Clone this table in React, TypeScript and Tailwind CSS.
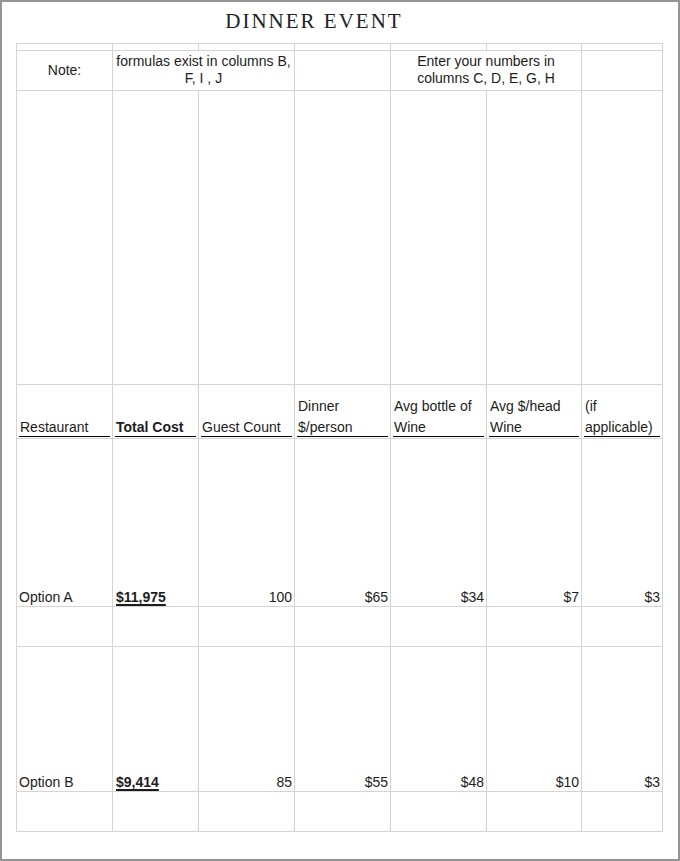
import React from "react";

const C = "border-r border-b border-[#d4d4d4]";

function Cell({ className = "", children }: { className?: string; children?: React.ReactNode }) {
  return <div className={`${C} box-border ${className}`}>{children}</div>;
}

function HeadCell({ children, bold = false }: { children: React.ReactNode; bold?: boolean }) {
  return (
    <Cell className="flex items-end pb-[1px] px-[2px]">
      <div className="w-full border-b border-black">
        <div className={`leading-[21px] -mb-[2px] pl-[1px] ${bold ? "font-bold" : ""}`}>{children}</div>
      </div>
    </Cell>
  );
}

function DataRow({ name, total, vals }: { name: string; total: string; vals: string[] }) {
  return (
    <>
      <Cell className="flex items-end pb-[1px] pl-[2px] leading-[16px]">{name}</Cell>
      <Cell className="flex items-end pb-[1px] pl-[3px] leading-[16px]">
        <span className="font-bold underline decoration-[1.5px] underline-offset-[2px]">{total}</span>
      </Cell>
      {vals.map((v, i) => (
        <Cell key={i} className="flex items-end justify-end pb-[1px] pr-[2px] leading-[16px]">
          {v}
        </Cell>
      ))}
    </>
  );
}

function EmptyRow() {
  return (
    <>
      {Array.from({ length: 7 }).map((_, i) => (
        <Cell key={i} />
      ))}
    </>
  );
}

export default function App() {
  return (
    <div className="w-[680px] h-[861px] box-border border-2 border-[#949494] bg-white text-[#1c1c1c]" style={{ fontFamily: '"Liberation Sans", Arial, sans-serif' }}>
      <div className="h-[41px] ml-[14px] w-[596px] flex justify-center">
        <div className="text-[21px] tracking-[2px] leading-[38px] text-[#222]" style={{ fontFamily: '"Liberation Serif", "Times New Roman", serif' }}>
          DINNER EVENT
        </div>
      </div>
      <div className="ml-[14px] w-[647px] border-l border-t border-[#d4d4d4] grid grid-cols-[96px_86px_96px_96px_96px_95px_81px] grid-rows-[7px_40px_294px_54px_168px_40px_145px_40px] text-[14px]">
        <EmptyRow />
        <Cell className="flex items-center justify-center leading-[17px]">Note:</Cell>
        <Cell className="col-span-2 flex items-center justify-center text-center leading-[17px] pb-[1px]">
          formulas exist in columns B,
          <br />
          F, I , J
        </Cell>
        <Cell />
        <Cell className="col-span-2 flex items-center justify-center text-center leading-[17px] pb-[1px]">
          Enter your numbers in
          <br />
          columns C, D, E, G, H
        </Cell>
        <Cell />
        <EmptyRow />
        <HeadCell>Restaurant</HeadCell>
        <HeadCell bold>Total Cost</HeadCell>
        <HeadCell>Guest Count</HeadCell>
        <HeadCell>
          Dinner
          <br />
          $/person
        </HeadCell>
        <HeadCell>
          Avg bottle of
          <br />
          Wine
        </HeadCell>
        <HeadCell>
          Avg $/head
          <br />
          Wine
        </HeadCell>
        <HeadCell>
          (if
          <br />
          applicable)
        </HeadCell>
        <DataRow name="Option A" total="$11,975" vals={["100", "$65", "$34", "$7", "$3"]} />
        <EmptyRow />
        <DataRow name="Option B" total="$9,414" vals={["85", "$55", "$48", "$10", "$3"]} />
        <EmptyRow />
      </div>
    </div>
  );
}
